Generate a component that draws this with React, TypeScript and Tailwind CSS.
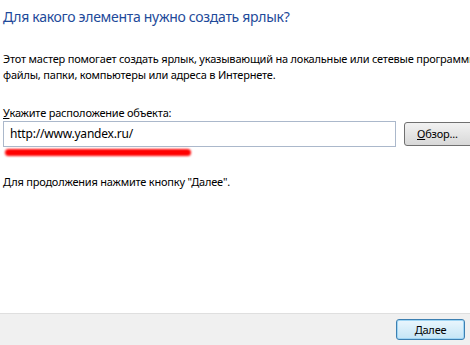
import React from 'react';

const App = () => {
  return (
    <div
      className="w-[470px] h-[345px] bg-white flex flex-col overflow-hidden text-[#000] text-[11px] tracking-[-0.2px]"
      style={{ fontFamily: '"Noto Sans", "Open Sans", sans-serif' }}
    >
      <div className="flex-1 flex flex-col pl-[3px]">
        <h1 className="mt-[7px] text-[14px] leading-[20px] tracking-[-0.3px] text-[#1e4a9a] whitespace-nowrap">
          Для какого элемента нужно создать ярлык?
        </h1>

        <div className="mt-[24px] leading-[16px] whitespace-nowrap">
          <p>Этот мастер помогает создать ярлык, указывающий на локальные или сетевые программы,</p>
          <p>файлы, папки, компьютеры или адреса в Интернете.</p>
        </div>

        <p className="mt-[22px] leading-[16px]">
          <span className="underline">У</span>кажите расположение объекта:
        </p>

        <div className="flex items-center gap-[8px]">
          <div className="relative w-[393px] h-[26px] shrink-0 border border-[#abb8cb] bg-white flex items-center pl-[6px] text-[12px]">
            http://www.yandex.ru/
            <div className="absolute left-[1px] top-[27px] w-[186px] h-[7px] rounded-full bg-[#ff0000] blur-[1px]" />
          </div>
          <button className="w-[72px] h-[24px] shrink-0 border border-[#707070] rounded-[3px] bg-gradient-to-b from-[#f2f2f2] to-[#d8d8d8] text-left pl-[12px] whitespace-nowrap">
            <span className="underline">О</span>бзор...
          </button>
        </div>

        <p className="mt-[27px] leading-[16px]">Для продолжения нажмите кнопку "Далее".</p>
      </div>

      <div className="h-[32px] bg-[#f0f0f0] border-t border-[#dfdfdf] flex items-center justify-end pr-[5px]">
        <button className="w-[69px] h-[21px] border border-[#3c7fb1] rounded-[3px] bg-gradient-to-b from-[#eaf6fd] to-[#c4e5f6] shadow-[inset_0_0_0_1px_#9fd5f4] leading-[18px]">
          <span className="underline">Д</span>алее
        </button>
      </div>
    </div>
  );
};

export default App;
